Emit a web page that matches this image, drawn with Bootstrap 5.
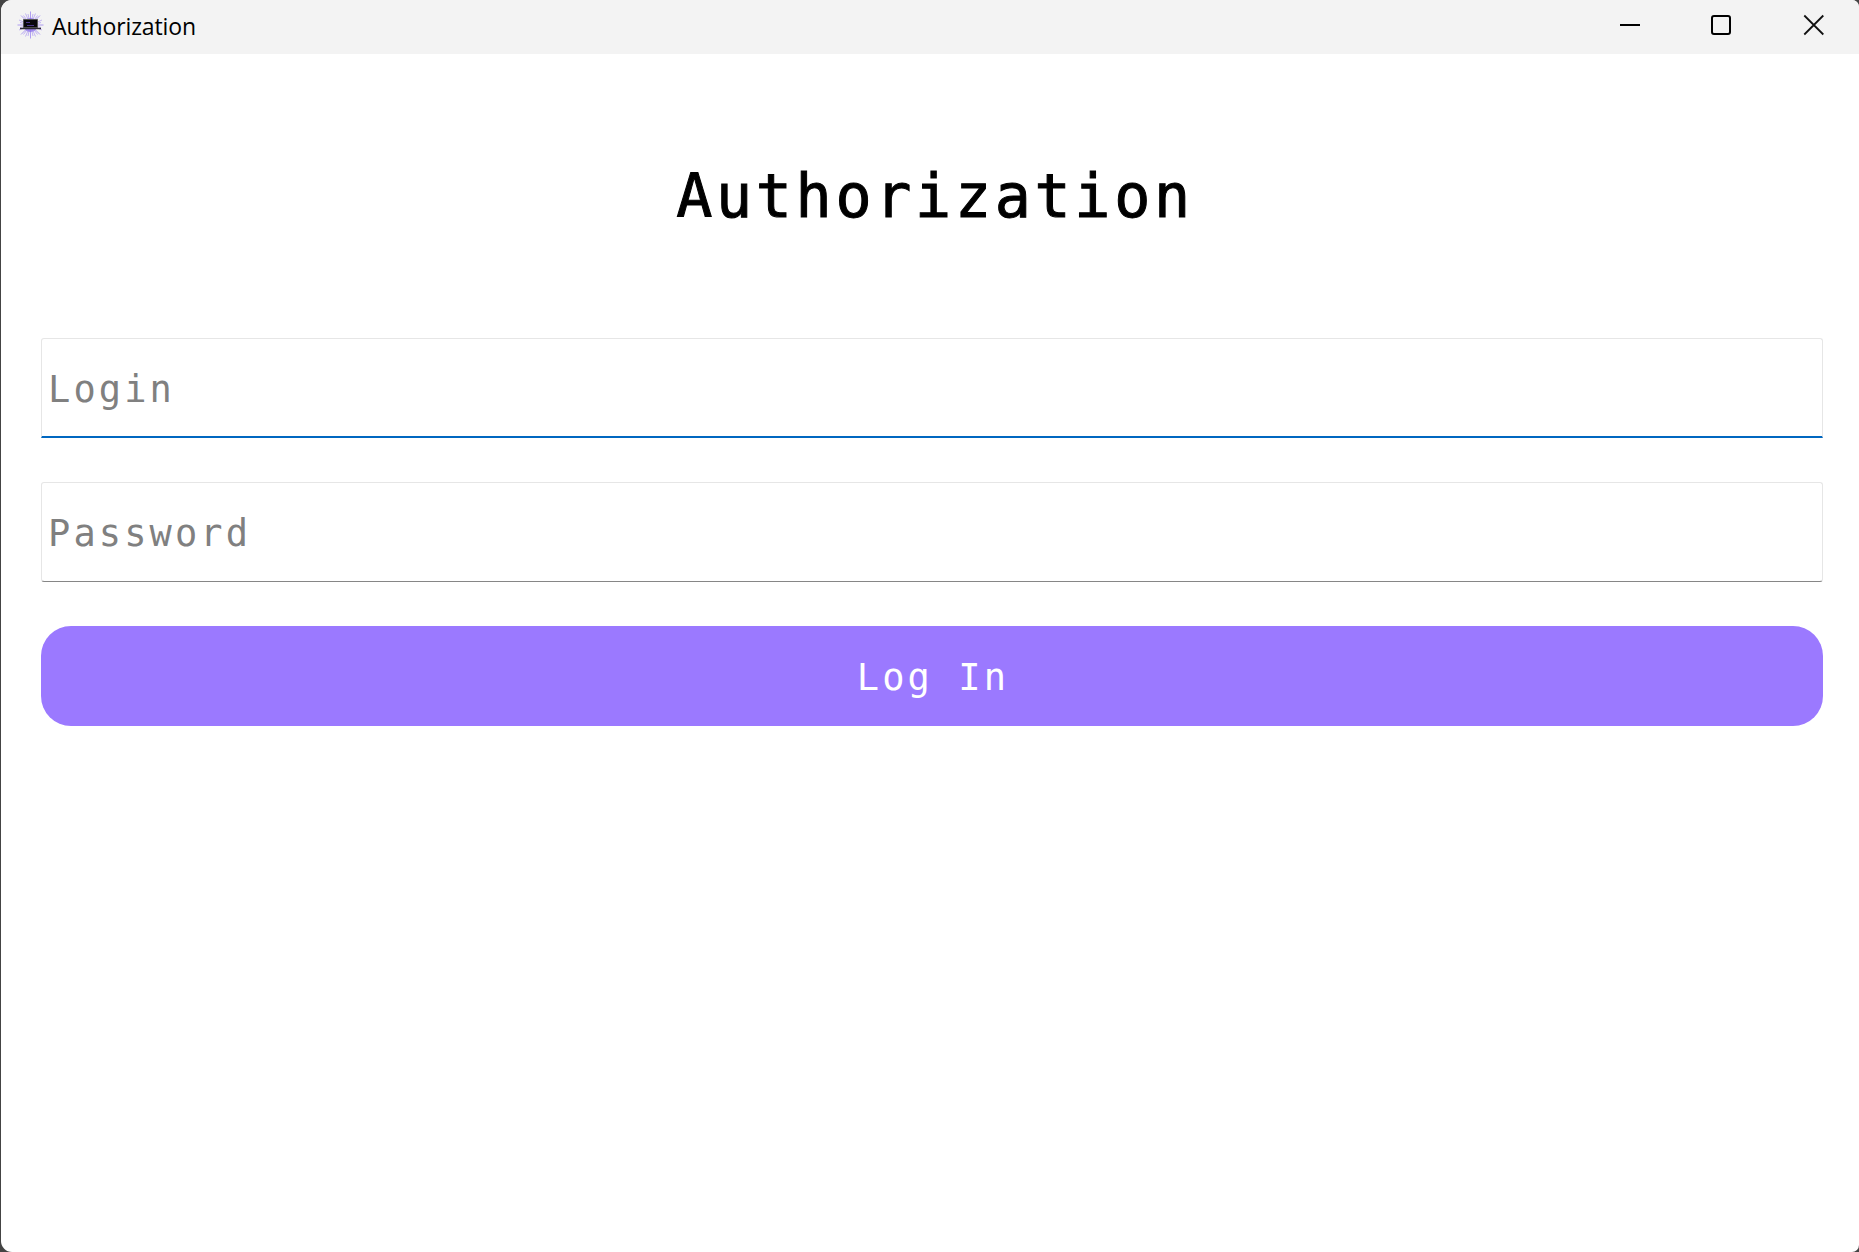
<!DOCTYPE html>
<html lang="en">
<head>
<meta charset="utf-8">
<title>Authorization</title>
<link rel="stylesheet" href="https://cdn.jsdelivr.net/npm/bootstrap@5.3.0/dist/css/bootstrap.min.css">
<style>
body { background: #444; overflow: hidden; }
.app-window { margin-left: 1px; height: 1252px; border-radius: 11px 7px 7px 11px; }
.title-bar { height: 54px; background: #f3f3f3; padding-left: 16px; padding-right: 8px; }
.title-text { font: 23px/52px "Open Sans", sans-serif; letter-spacing: -.12px; margin-left: 7px; color: #000; }
.win-btn { width: 92px; height: 50px; }
.app-body { padding: 0 36px 0 40px; font-family: "DejaVu Sans Mono", monospace; }
.app-title { font-size: 60px; line-height: 70px; letter-spacing: 3.7px; margin: 107px 0 107px; padding-left: 6px; color: #000; -webkit-text-stroke: 1px #000; }
.field, .login-btn { height: 100px; font-size: 37px; letter-spacing: 3.1px; font-family: inherit; }
.field { border: 1px solid #e6e6e6; border-bottom-color: #868686; border-radius: 3px; padding: 2px 6px 0; margin-bottom: 44px; line-height: 96px; }
.field::placeholder { color: #808080; opacity: 1; }
.field-active { border-bottom: 2px solid #0067c0; border-radius: 3px 3px 0 0; padding-top: 3px; }
.login-btn, .login-btn:hover { background: #9b79ff; color: #fff; border: 0; border-radius: 30px; padding: 4px 0 0 2px; }
</style>
<script src="https://cdn.jsdelivr.net/npm/bootstrap@5.3.0/dist/js/bootstrap.bundle.min.js"></script>
</head>
<body>
<div class="app-window bg-white overflow-hidden">
  <header class="title-bar d-flex align-items-start">
    <svg width="28" height="50" viewBox="0 0 28 50">
      <g stroke="#8062f0" fill="none">
        <path d="M13.500 11.500v27M.500 25h26M4 15.500l19 19M23 15.500l-19 19" stroke-width=".9" opacity=".65"/>
        <path d="M8.500 13.500l10 23M18.500 13.500l-10 23M2 20l23 10M25 20l-23 10M11 14l5 22M16 14l-5 22M3 22.500l21 5M24 22.500l-21 5M6.500 15.500l14 19M20.500 15.500l-14 19" stroke-width=".8" opacity=".55"/>
      </g>
      <circle cx="13.500" cy="25" r="7" fill="#8265e8" opacity=".65"/>
      <path d="M6.500 19.500h14v8h-14z" fill="#07060d" stroke="#555"/>
      <path d="M9 22.500h4M10 25.500h7" stroke="#493688" fill="none"/>
      <path d="M3 28.500h21" stroke="#292733" stroke-width="1.500"/>
    </svg>
    <span class="title-text">Authorization</span>
    <div class="d-flex ms-auto">
      <svg class="win-btn" viewBox="0 0 92 50" stroke="#000" stroke-width="2"><path d="M45 25h20"/></svg>
      <svg class="win-btn" viewBox="0 0 92 50" stroke="#000" stroke-width="2" fill="none"><rect x="45" y="16" width="18" height="18" rx="2"/></svg>
      <svg class="win-btn" viewBox="0 0 92 50" stroke="#111" stroke-width="1.8" fill="none"><path d="M45.300 15.500l19 19M64.300 15.500l-19 19"/></svg>
    </div>
  </header>
  <main class="app-body d-flex flex-column">
    <h1 class="app-title text-center fw-normal">Authorization</h1>
    <input class="form-control shadow-none field field-active" type="text" placeholder="Login" aria-label="Login">
    <input class="form-control shadow-none field" type="password" placeholder="Password" aria-label="Password">
    <button class="btn login-btn w-100" type="button">Log In</button>
  </main>
</div>
</body>
</html>
